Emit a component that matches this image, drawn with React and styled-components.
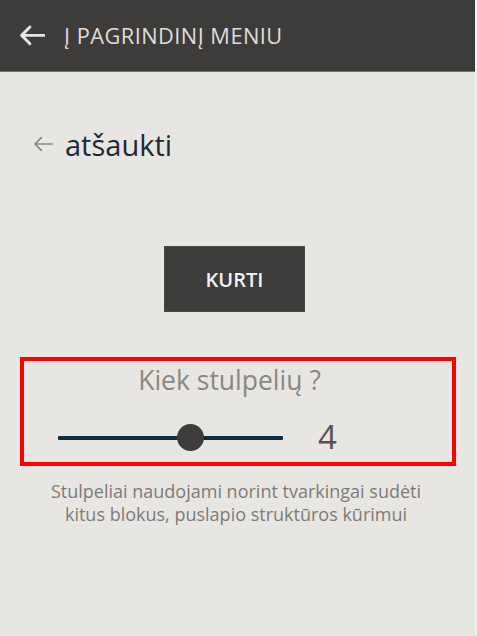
import React, { useState } from "react";
import styled, { createGlobalStyle } from "styled-components";

const Global = createGlobalStyle`
  html, body { margin: 0; padding: 0; background: #e8e6e2; }
  body { font-family: "Open Sans", "Noto Sans", sans-serif; }
  * { box-sizing: border-box; }
`;

const Page = styled.div`
  width: 477px;
  height: 636px;
  background: #e8e6e2;
  border-right: 2px solid #f1f0ee;
  overflow: hidden;
`;

const TopBar = styled.header`
  height: 72px;
  background: #3e3c3a;
  border-bottom: 1px solid #77746f;
  display: flex;
  align-items: center;
  padding-left: 19px;
  gap: 19px;
  color: #e6e6e4;
`;

const BarTitle = styled.span`
  font-size: 21.8px;
  letter-spacing: 0.45px;
  text-transform: uppercase;
  color: #dedddb;
  line-height: 1;
  padding-top: 1px;
`;

const Main = styled.main`
  padding: 0 20px;
  display: flex;
  flex-direction: column;
`;

const CancelRow = styled.a`
  margin-top: 54px;
  height: 36px;
  display: flex;
  align-items: center;
  gap: 12px;
  padding-left: 13px;
  color: #1e2834;
  text-decoration: none;
  font-size: 29px;
  cursor: pointer;
`;

const CreateButton = styled.button`
  margin-top: 84px;
  margin-left: 144px;
  width: 141px;
  height: 66px;
  background: #3e3c3a;
  border: 1px solid #4a4846;
  color: #f2f2f2;
  font-family: "Open Sans", "Noto Sans", sans-serif;
  font-size: 20px;
  font-weight: 600;
  cursor: pointer;
`;

const ColumnsBox = styled.section`
  margin-top: 45px;
  width: 436px;
  height: 109px;
  border: 4px solid #ff0000;
  display: flex;
  flex-direction: column;
  align-items: center;
  padding-top: 2px;
`;

const BoxTitle = styled.div`
  font-size: 26.5px;
  line-height: 34px;
  color: #8b8781;
  margin-right: 17px;
`;

const SliderRow = styled.div`
  margin-top: 25px;
  align-self: stretch;
  display: flex;
  align-items: center;
  padding-left: 34px;
  gap: 35px;
`;

const Range = styled.input`
  -webkit-appearance: none;
  appearance: none;
  width: 225px;
  height: 27px;
  margin: 0;
  background: transparent;
  &::-webkit-slider-runnable-track {
    height: 4px;
    background: #0f2d40;
    border-radius: 1px;
  }
  &::-webkit-slider-thumb {
    -webkit-appearance: none;
    width: 27px;
    height: 27px;
    border-radius: 50%;
    background: #3e3c3a;
    margin-top: -11.5px;
    border: none;
  }
  &:focus { outline: none; }
`;

const Value = styled.span`
  font-size: 33px;
  line-height: 1;
  color: #56544f;
  margin-top: -2px;
`;

const Hint = styled.p`
  margin: 14px 0 0;
  width: 432px;
  text-align: center;
  font-size: 18px;
  line-height: 23px;
  color: #7e7b77;
`;

const Arrow = ({ size = 25, color, stroke = 2.6 }) => (
  <svg width={size} height={size * 0.8} viewBox="0 0 25 20" fill="none">
    <path
      d="M24 10H2.5M10.5 2L2.5 10l8 8"
      stroke={color}
      strokeWidth={stroke}
      strokeLinecap="round"
      strokeLinejoin="round"
    />
  </svg>
);

export default function App() {
  const [cols, setCols] = useState(4);
  return (
    <Page>
      <Global />
      <TopBar>
        <Arrow size={26} color="#e4e4e2" stroke={2.8} />
        <BarTitle>Į pagrindinį meniu</BarTitle>
      </TopBar>
      <Main>
        <CancelRow>
          <Arrow size={20} color="#8a8885" stroke={2} />
          atšaukti
        </CancelRow>
        <CreateButton>KURTI</CreateButton>
        <ColumnsBox>
          <BoxTitle>Kiek stulpelių ?</BoxTitle>
          <SliderRow>
            <Range
              type="range"
              min={1}
              max={6}
              value={cols}
              onChange={(e) => setCols(Number(e.target.value))}
            />
            <Value>{cols}</Value>
          </SliderRow>
        </ColumnsBox>
        <Hint>
          Stulpeliai naudojami norint tvarkingai sudėti
          <br />
          kitus blokus, puslapio struktūros kūrimui
        </Hint>
      </Main>
    </Page>
  );
}
